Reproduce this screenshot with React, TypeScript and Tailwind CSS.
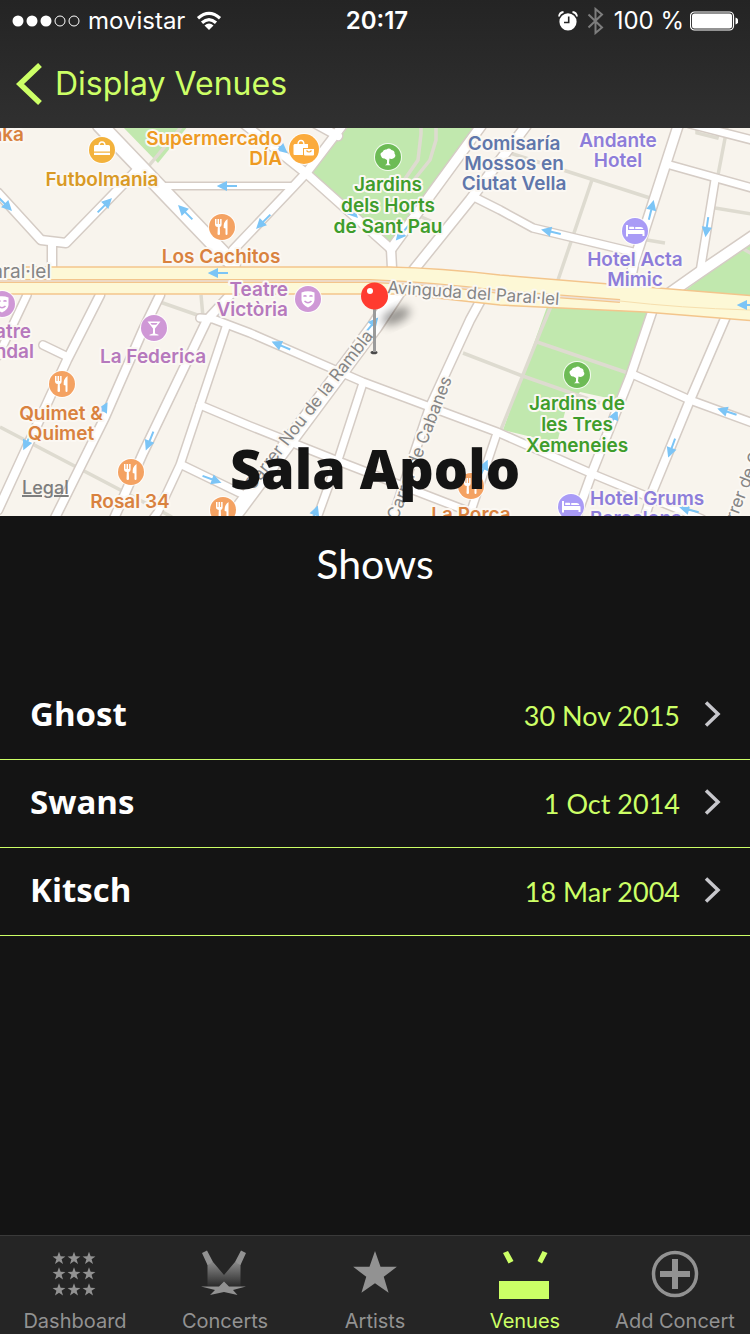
import type { ReactNode } from "react";

const SANS = "font-['Inter','Noto_Sans',sans-serif]";
const DISPLAY = "font-['Lato','Noto_Sans',sans-serif]";
const HEAVY = "font-['Open_Sans','Noto_Sans',sans-serif]";

/* ---------- Map data ---------- */

const parks = [
  "347,128 478,128 391,248 311,174",
  "122,126 158,163 188,126",
  "548,304 650,312 617,400 580,392 565,412 557,443 503,430",
  "752,240 738,250 678,296 752,302",
];

const paths = [
  "M147 168L182 126",
  "M421 128V134L418 160L400 186M436 128V140L430 160L409 186",
  "M507 152L563 170L650 198M592 180L558 280",
  "M647 240L665 243M727 128L718 175M715 208L752 214",
  "M697 126V133L717 138L720 128",
  "M552 304L541 330L500 432M537 342L628 373M463 353L520 375L600 403",
  "M0 427L172 517M160 302L203 317M201 295L203 317",
  "M417 215L442 226M738 246L752 254",
];

const roads: { d: string; w: number }[] = [
  { d: "M100 125L233 264", w: 14 },
  { d: "M-2 193L41 240L66 243L135 172M52 243V267", w: 8 },
  { d: "M165 186H293", w: 6 },
  { d: "M342 126L307 172L293 187L233 250M316 124L338 136", w: 8 },
  { d: "M244 124L307 174L391 249L392 268", w: 8 },
  { d: "M481 126L391 249", w: 9 },
  { d: "M526 126L470 200L412 272", w: 9 },
  { d: "M402 285L375 326L238 510L230 520", w: 14 },
  { d: "M474 197L500 210L533 228L633 252", w: 7 },
  { d: "M678 126L634 262L629 285", w: 9 },
  { d: "M670 165L752 188M690 124L752 140", w: 7 },
  { d: "M715 180L700 272", w: 7 },
  { d: "M753 236L700 272L670 293", w: 10 },
  { d: "M652 312L630 377L593 470L575 520", w: 8 },
  { d: "M727 314L690 400L653 490L644 520", w: 8 },
  { d: "M632 374L690 400L753 423", w: 7 },
  { d: "M200 318L213 319L250 333L363 382L497 432L595 475L702 519", w: 7 },
  { d: "M200 405L250 426L338 461L470 512", w: 7 },
  { d: "M363 383L338 460L317 518M497 433L468 520", w: 7 },
  { d: "M482 298L470 320L430 407L392 520", w: 8 },
  { d: "M226 327L200 405L180 465L158 512L152 520", w: 7 },
  { d: "M182 465L240 493", w: 7 },
  { d: "M230 295L207 320L143 453L112 523", w: 8 },
  { d: "M160 295L143 330L105 417L53 522", w: 8 },
  { d: "M100 295L67 360L-2 510", w: 8 },
  { d: "M43 345L68 357", w: 7 },
  { d: "M27 295L-2 356", w: 7 },
];

const arrows: [number, number, number][] = [
  [4, 203, 45], [104, 206, -45], [186, 213, -135], [228, 186, 180],
  [219, 273, 180], [264, 221, 135], [350, 210, 45], [403, 232, 130],
  [552, 232, -167], [651, 211, -76], [707, 226, 98], [748, 305, 180],
  [282, 346, -157], [102, 412, -60], [28, 440, 115], [150, 440, 112],
  [211, 479, 20], [314, 516, -70], [613, 420, -65], [672, 447, 110],
  [728, 412, -162], [690, 510, -165], [483, 470, -65], [279, 146, 40],
  [371, 326, -50],
];

type Label = { x: number; y: number; lines: string[]; tone: string; anchor?: "start" | "middle" | "end"; gap?: number };

const labels: Label[] = [
  { x: 24, y: 141, lines: ["nka"], tone: "#d9823f", anchor: "end" },
  { x: 102, y: 186, lines: ["Futbolmania"], tone: "#d99a25" },
  { x: 282, y: 145, lines: ["Supermercado", "DÍA"], tone: "#ee9a22", anchor: "end" },
  { x: 221, y: 263, lines: ["Los Cachitos"], tone: "#d9823f" },
  { x: 288, y: 296, lines: ["Teatre", "Victòria"], tone: "#b679bd", anchor: "end" },
  { x: 31, y: 338, lines: ["atre"], tone: "#b679bd", anchor: "end" },
  { x: 34, y: 358, lines: ["ndal"], tone: "#b679bd", anchor: "end" },
  { x: 153, y: 363, lines: ["La Federica"], tone: "#b679bd" },
  { x: 61, y: 420, lines: ["Quimet &", "Quimet"], tone: "#d9823f" },
  { x: 130, y: 508, lines: ["Rosal 34"], tone: "#d9823f" },
  { x: 388, y: 191, lines: ["Jardins", "dels Horts", "de Sant Pau"], tone: "#3f9d2c", gap: 21 },
  { x: 514, y: 150, lines: ["Comisaría", "Mossos en", "Ciutat Vella"], tone: "#6077ab" },
  { x: 618, y: 147, lines: ["Andante", "Hotel"], tone: "#8d7dda" },
  { x: 635, y: 266, lines: ["Hotel Acta", "Mimic"], tone: "#8d7dda" },
  { x: 577, y: 410, lines: ["Jardins de", "les Tres", "Xemeneies"], tone: "#3f9d2c", gap: 21 },
  { x: 590, y: 505, lines: ["Hotel Grums", "Barcelona"], tone: "#8d7dda", anchor: "start" },
  { x: 471, y: 521, lines: ["La Porca"], tone: "#d9823f" },
];

/* ---------- Map glyphs, drawn round their own centre ---------- */

const Fork = () => (
  <g fill="#fff">
    <path d="M-7-8h1.500v5h1V-8h1.600v5h1V-8H-.4v5.500Q-.4-.4-2.200 0L-2 7q0 1-1.200 1T-4.500 7L-4.200 0Q-7-.4-7-2.800z" />
    <path d="M5.500-8V7q0 1-1 1t-1-1V1.500L1.700 1Q1-5 5.500-8z" />
  </g>
);
const Tree = () => (
  <path fill="#fff" d="M-7-1Q-8.500-4-5.500-5-4.500-8-1.500-7.500 1-9.500 3.500-7 7-6.500 6.500-3.500 8.500-1 6 1 3.500 2.500 1.500 1.500L1 6Q1.200 7.500 3 8.200H-3Q-1.200 7.500-1 6V3L-3.500 1.500Q-6 2-7-1z" />
);
const Bed = () => (
  <path fill="#fff" d="M-9-6h2v5h15.500q1 0 1 1v5h-2V3H-7v2.500h-2zM-5.800-4.200h4q1 0 1 1V-2h-5zM.2-4h5.500q2 0 2.800 2H.2z" />
);
const Mask = () => (
  <g>
    <path fill="#fff" d="M-6.500-6.500Q0-9 6.500-6.500V1Q6 6 0 8.500-6 6-6.500 1z" />
    <path fill="none" stroke="#cf98d6" strokeWidth="1.500" d="M-4.500-2.500q1.500-1.500 3 0M1.500-2.500q1.500-1.500 3 0M-3.500 2Q0 5.500 3.500 2" />
  </g>
);
const Glass = () => (
  <path fill="#fff" fillRule="evenodd" d="M-6.500-6.500h13L1 .5v5l3.500 1.300v.8h-9v-.8L-1 5.500v-5zM-3.600-5l1.400 1.800h4.400L3.600-5z" />
);
const Bag = () => (
  <g>
    <path fill="none" stroke="#fff" strokeWidth="1.500" d="M-3-4q0-4 3-4t3 4" />
    <path fill="#fff" d="M-6.500-5h13q1.500 0 1.500 1.500V1.500H-8v-5Q-8-5-6.500-5zM-8 2.800H8V5H-8z" />
  </g>
);
const Shop = () => (
  <g>
    <path fill="none" stroke="#fff" strokeWidth="1.400" d="M-6-4q0-4.500 3-4.500t3 4.500" />
    <path fill="#fff" d="M-9.500-5H4v4H-1V6h-8.500q-1 0-1-1v-9z" />
    <path fill="#fff" d="M0 0h10v5.500q0 1-1 1H1q-1 0-1-1z" />
    <path fill="none" stroke="#fbab3c" strokeWidth="1.200" d="M2.500 1.500q2.500 3 5 0" />
  </g>
);

const ORANGE = "#f4a262";
const PLUM = "#cf98d6";
const VIOLET = "#a99bf6";
const GREEN = "#6dbb55";

const places: { x: number; y: number; r?: number; fill: string; glyph: ReactNode }[] = [
  { x: 102, y: 150, fill: "#f3b23c", glyph: <Bag /> },
  { x: 304, y: 149, r: 15, fill: "#fbab3c", glyph: <Shop /> },
  { x: 388, y: 157, fill: GREEN, glyph: <Tree /> },
  { x: 577, y: 375, fill: GREEN, glyph: <Tree /> },
  { x: 222, y: 227, fill: ORANGE, glyph: <Fork /> },
  { x: 62, y: 384, fill: ORANGE, glyph: <Fork /> },
  { x: 131, y: 472, fill: ORANGE, glyph: <Fork /> },
  { x: 223, y: 510, fill: ORANGE, glyph: <Fork /> },
  { x: 471, y: 486, fill: ORANGE, glyph: <Fork /> },
  { x: 308, y: 299, fill: PLUM, glyph: <Mask /> },
  { x: 2, y: 304, fill: PLUM, glyph: <Mask /> },
  { x: 154, y: 328, fill: PLUM, glyph: <Glass /> },
  { x: 635, y: 231, fill: VIOLET, glyph: <Bed /> },
  { x: 571, y: 507, fill: VIOLET, glyph: <Bed /> },
];

const halo = { stroke: "#fbf8f3", strokeWidth: 4, strokeLinejoin: "round", paintOrder: "stroke" } as const;

function VenueMap() {
  return (
    <svg viewBox="0 128 750 388" preserveAspectRatio="xMidYMid slice" className={`block h-full w-full ${SANS}`} role="img" aria-label="Map">
      <defs>
        <filter id="soft" x="-50%" y="-50%" width="200%" height="200%">
          <feGaussianBlur stdDeviation="5" />
        </filter>
      </defs>
      <rect x="-10" y="100" width="800" height="450" fill="#f8f4ed" />
      {parks.map((p) => <polygon key={p} points={p} fill="#c1e8ae" />)}
      <g fill="none" stroke="#dedbd0" strokeWidth="3.500">
        {paths.map((d) => <path key={d} d={d} />)}
      </g>
      <g fill="none" stroke="#d5ccc5" strokeLinejoin="round" strokeLinecap="round">
        {roads.map((r) => <path key={r.d} d={r.d} strokeWidth={r.w + 3} />)}
      </g>
      <g fill="none" stroke="#fff" strokeLinejoin="round" strokeLinecap="round">
        {roads.map((r) => <path key={r.d} d={r.d} strokeWidth={r.w} />)}
      </g>

      <path d="M-5 267H390Q440 268 500 275L755 296V321L645 312L500 305L400 294H-5z" fill="#fdf8d6" stroke="#f3c58c" strokeWidth="1.500" />
      <path d="M-5 281H370Q440 284 500 292L620 301" fill="none" stroke="#f3c58c" strokeWidth="4" />
      <path d="M-5 281H370Q440 284 500 292L620 301" fill="none" stroke="#ece0d8" strokeWidth="1.500" />
      <path d="M620 301Q680 308 750 310" fill="none" stroke="#f6dfae" strokeWidth="1" />

      {arrows.map(([x, y, a]) => (
        <path key={`${x}-${y}`} transform={`translate(${x} ${y}) rotate(${a})`} d="M-9 0H3M9 0L2-3.500V3.500z" fill="#7cc5f6" stroke="#7cc5f6" strokeWidth="2" />
      ))}

      <g fill="#858585" fontSize="17" {...halo}>
        <text x="51" y="278" fontSize="19" textAnchor="end">aral·lel</text>
        <text transform="translate(387 293) rotate(4)">Avinguda del Paral·lel</text>
        <text textAnchor="end" transform="translate(374 336) rotate(-52)">Carrer Nou de la Rambla</text>
        <text textAnchor="end" transform="translate(452 379) rotate(-69)">Carrer de Cabanes</text>
        <text transform="translate(736 521) rotate(-69)">rrer de Co</text>
      </g>

      {places.map((p) => (
        <g key={`${p.x}-${p.y}`} transform={`translate(${p.x} ${p.y})`}>
          <circle r={(p.r ?? 13) + 1} fill="#fff" opacity="0.800" />
          <circle r={p.r ?? 13} fill={p.fill} />
          {p.glyph}
        </g>
      ))}

      {labels.map((l) =>
        l.lines.map((t, i) => (
          <text key={`${t}-${l.x}`} x={l.x} y={l.y + i * (l.gap ?? 20)} textAnchor={l.anchor ?? "middle"} fontSize="19" fontWeight="600" fill={l.tone} {...halo}>
            {t}
          </text>
        )),
      )}

      <ellipse cx="396" cy="316" rx="15" ry="7" transform="rotate(-25 396 316)" fill="#000" opacity="0.400" filter="url(#soft)" />
      <ellipse cx="374" cy="352.500" rx="3.500" ry="1.800" fill="#4a4a4a" />
      <rect x="373" y="306" width="3" height="46" fill="#9b9b9b" />
      <circle cx="374.500" cy="296" r="13.500" fill="#ff3b30" />
      <circle cx="370" cy="291" r="3" fill="#fff" />
    </svg>
  );
}

/* ---------- Status bar ---------- */

function StatusBar() {
  return (
    <div className="grid h-10 grid-cols-3 items-center px-3 pt-px text-2xl text-white">
      <div className="flex items-center gap-2">
        <svg width="68" height="12" viewBox="0 0 68 12" aria-hidden="true">
          {[6, 20, 34].map((x) => <circle key={x} cx={x} cy="6" r="5.500" fill="#fff" />)}
          {[48, 62].map((x) => <circle key={x} cx={x} cy="6" r="5" fill="none" stroke="#fff" />)}
        </svg>
        <span>movistar</span>
        <svg width="32" height="20" viewBox="-4 0 32 20" aria-hidden="true">
          <g fill="none" stroke="#fff" strokeWidth="3.200">
            <path d="M1 7.200Q12-2.500 23 7.200" />
            <path d="M5 11.800Q12 5.500 19 11.800" />
          </g>
          <path d="M7.500 14.500Q12 10.500 16.500 14.500L12 19z" fill="#fff" />
        </svg>
      </div>
      <div className="pl-1 text-center font-semibold">20:17</div>
      <div className="flex items-center justify-end gap-1.5">
        <svg width="20" height="20" viewBox="0 0 20 20" className="shrink-0" aria-hidden="true">
          <circle cx="10" cy="10.800" r="8.600" fill="#fff" />
          <path d="M1 5.500Q1.500 1.500 5.500 1M19 5.500Q18.500 1.500 14.500 1" fill="none" stroke="#fff" strokeWidth="1.800" />
          <path d="M10.700 5.500v6H6" fill="none" stroke="#262626" strokeWidth="1.600" />
        </svg>
        <svg width="24" height="28" viewBox="0 0 24 28" className="shrink-0" aria-hidden="true">
          <path d="M4.500 7.500L18 20.500L11.500 26V2L18 7.500L4.500 20.500" fill="none" stroke="#7d7d7d" strokeWidth="2" />
        </svg>
        <span className="whitespace-nowrap">100 %</span>
        <svg width="48" height="20" viewBox="0 0 48 20" className="shrink-0" aria-hidden="true">
          <rect x="0.500" y="1" width="43" height="18" rx="4" fill="none" stroke="#fff" strokeWidth="1.200" />
          <rect x="2" y="2.500" width="40" height="15" rx="2.500" fill="#fff" />
          <path d="M45.500 6.500q3 1 3 3.500t-3 3.500z" fill="#fff" />
        </svg>
      </div>
    </div>
  );
}

/* ---------- Tab bar ---------- */

const STAR = "M0-10L2.400-3.200L9.500-3.100L3.800 1.200L5.900 8.100L0 4L-5.900 8.100L-3.800 1.200L-9.500-3.100L-2.400-3.200z";

const tabs: { name: string; active?: boolean; icon: ReactNode }[] = [
  {
    name: "Dashboard",
    icon: [9, 24, 39].flatMap((x) =>
      [9.500, 25, 41].map((y) => <path key={`${x}-${y}`} transform={`translate(${x} ${y}) scale(.68)`} d={STAR} fill="#929292" />),
    ),
  },
  {
    name: "Concerts",
    icon: (
      <g transform="translate(-2 0)">
        <defs>
          <linearGradient id="beam" x1="0" y1="0" x2="0" y2="1">
            <stop offset="0" stopColor="#8a8a8a" />
            <stop offset="1" stopColor="#2c2c2c" />
          </linearGradient>
        </defs>
        <path d="M9.500 14L15 13L26 26V37H9.500zM42.500 14L37 13L26 26V37H42.500z" fill="url(#beam)" />
        <path d="M4 4L9 1.500L15 13L9.500 16zM48 4L43 1.500L37 13L42.500 16z" fill="#929292" />
        <path d="M26 32.500L31 37.500H48L35 41L39.500 46L26 43L12 46L17 41L3 37.500H21z" fill="#929292" />
      </g>
    ),
  },
  { name: "Artists", icon: <path transform="translate(25 25) scale(2.300)" d={STAR} fill="#929292" /> },
  {
    name: "Venues",
    active: true,
    icon: <path d="M3 4L8 2L13.500 12L8.500 14.500zM47.500 4L42.500 2L37.500 12L42 14.500zM-1 32H49V50H-1z" fill="#ccff66" />,
  },
  {
    name: "Add Concert",
    icon: (
      <g fill="none" stroke="#929292">
        <circle cx="25" cy="25" r="21.500" strokeWidth="3.500" />
        <path d="M25 10V40M10 25H40" strokeWidth="6" />
      </g>
    ),
  },
];

function TabBar() {
  return (
    <nav className="grid grid-cols-5 border-t border-[#3a3a3a] bg-[#252525] pt-[13px] pb-px">
      {tabs.map((t) => (
        <button key={t.name} type="button" aria-current={t.active ? "page" : undefined} className={`flex flex-col items-center gap-2 whitespace-nowrap text-xl leading-6 ${t.active ? "text-[#ccff66]" : "text-[#929292]"}`}>
          <svg width="50" height="52" viewBox="0 0 50 52" className="overflow-visible" aria-hidden="true">{t.icon}</svg>
          {t.name}
        </button>
      ))}
    </nav>
  );
}

const shows = [
  { artist: "Ghost", date: "30 Nov 2015" },
  { artist: "Swans", date: "1 Oct 2014" },
  { artist: "Kitsch", date: "18 Mar 2004" },
];

export default function App() {
  return (
    <div className={`flex min-h-screen flex-col bg-[#141414] ${SANS}`}>
      <header className="bg-linear-to-b from-[#242424] to-[#303030]">
        <StatusBar />
        <div className="flex h-22 items-center px-4">
          <button type="button" className="flex items-center gap-3 text-[32px] leading-10 text-[#ccff66]">
            <svg width="27" height="42" viewBox="0 0 27 42" aria-hidden="true">
              <path d="M24 2L4 21L24 40" fill="none" stroke="#ccff66" strokeWidth="5.500" />
            </svg>
            Display Venues
          </button>
        </div>
      </header>

      <main className={`grow ${DISPLAY}`}>
        <section className="relative h-[388px] overflow-hidden">
          <VenueMap />
          <a href="#legal" className={`absolute bottom-4 left-[22px] text-lg leading-6 font-medium text-[#7d7d7d] underline decoration-2 ${SANS}`}>Legal</a>
          <h1 className={`absolute inset-x-0 bottom-4 text-center text-[54px] leading-16 font-extrabold text-[#141414] ${HEAVY}`}>Sala Apolo</h1>
        </section>
        <h2 className="pt-6 text-center text-[41px] leading-12 text-white">Shows</h2>
        <ul className="pt-21">
          {shows.map((s) => (
            <li key={s.artist} className="border-b border-b-[#ccff66]">
              <a href="#show" className="flex h-[87px] items-center pr-7 pb-1 pl-[30px]">
                <span className={`grow text-[33px] leading-10 font-bold text-white ${HEAVY}`}>{s.artist}</span>
                <span className="pt-1 text-[27px] leading-10 text-[#ccff66]">{s.date}</span>
                <svg width="18" height="28" viewBox="0 0 18 28" className="ml-6" aria-hidden="true">
                  <path d="M2 2.500L14 14L2 25.500" fill="none" stroke="#c7c7cc" strokeWidth="3.500" />
                </svg>
              </a>
            </li>
          ))}
        </ul>
      </main>

      <TabBar />
    </div>
  );
}
